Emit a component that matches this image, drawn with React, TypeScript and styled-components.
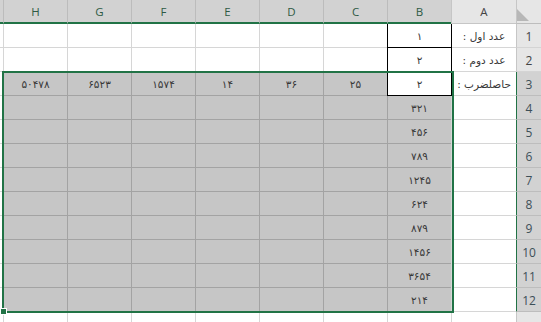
import React from "react";
import styled, { createGlobalStyle, css } from "styled-components";

const GREEN = "#217346";

const Global = createGlobalStyle`
  html, body { margin: 0; padding: 0; background: #ffffff; overflow: hidden; }
  #root { width: 541px; height: 322px; }
`;

const Sheet = styled.div`
  direction: rtl;
  width: 541px;
  height: 322px;
  overflow: hidden;
  display: grid;
  grid-template-columns: 25px 65px repeat(8, 64px);
  grid-template-rows: repeat(14, 24px);
  justify-content: start;
  align-content: start;
  font-family: "DejaVu Sans", "Noto Sans", sans-serif;
`;

type Pos = { $r: number; $c: number };

const placed = css<Pos>`
  grid-row: ${(p) => p.$r};
  grid-column: ${(p) => p.$c};
`;

const HeaderBase = css`
  box-sizing: border-box;
  display: flex;
  align-items: center;
  justify-content: center;
  font-family: "Open Sans", "Lato", sans-serif;
  font-size: 11.5px;
  color: #444444;
  background: #e6e6e6;
  border-left: 1px solid #c6c6c6;
  border-bottom: 1px solid #c6c6c6;
`;

const Corner = styled.div`
  ${HeaderBase};
  grid-row: 1;
  grid-column: 1;
  justify-content: flex-end;
  align-items: flex-end;
  padding: 0 3px 2px 0;
  border-bottom: 1px solid #bdbdbd;
`;

const ColHeader = styled.div<Pos & { $selected?: boolean }>`
  ${HeaderBase};
  ${placed};
  ${(p) =>
    p.$selected &&
    css`
      background: #d2d2d2;
      color: #2e5a44;
      border-left-color: #bcbcbc;
      border-bottom: 2px solid ${GREEN};
      padding-top: 1px;
    `}
`;

const RowHeader = styled.div<Pos & { $selected?: boolean }>`
  ${HeaderBase};
  ${placed};
  border-bottom-color: #d4d4d4;
  padding-top: 2px;
  font-size: 12px;
  ${(p) =>
    p.$selected &&
    css`
      background: #d2d2d2;
      color: #3d4f58;
      border-bottom-color: #bdbdbd;
      border-left: 2px solid ${GREEN};
      margin-left: -1px;
    `}
`;

const Cell = styled.div<Pos & { $selected?: boolean; $boxed?: boolean; $active?: boolean }>`
  ${placed};
  box-sizing: border-box;
  display: flex;
  align-items: center;
  justify-content: center;
  font-size: 10.5px;
  color: #383838;
  white-space: nowrap;
  background: #ffffff;
  border-left: 1px solid #d6d6d6;
  border-bottom: 1px solid #d6d6d6;
  ${(p) =>
    p.$selected &&
    css`
      background: #c6c6c6;
      border-left-color: #a3a3a3;
      border-bottom-color: #a3a3a3;
    `}
  ${(p) =>
    p.$active &&
    css`
      background: #ffffff;
    `}
  ${(p) =>
    p.$boxed &&
    css`
      border-left-color: #000000;
      border-bottom-color: #000000;
      box-shadow: 1px 0 0 #000000;
    `}
`;

const SelectionFrame = styled.div`
  grid-row: 4 / 14;
  grid-column: 3 / 10;
  margin: -1px -3px -1px -1px;
  border: 2px solid ${GREEN};
  position: relative;
  pointer-events: none;
`;

const FillHandle = styled.div`
  position: absolute;
  left: -4px;
  bottom: -4px;
  width: 5px;
  height: 5px;
  background: ${GREEN};
  border: 1px solid #ffffff;
`;

const cols = ["A", "B", "C", "D", "E", "F", "G", "H", "I"];
const selectedCols = new Set(["B", "C", "D", "E", "F", "G", "H", "I"]);

const data: Record<string, string> = {
  A1: "عدد اول :",
  B1: "۱",
  A2: "عدد دوم :",
  B2: "۲",
  A3: "حاصلضرب :",
  B3: "۲",
  C3: "۲۵",
  D3: "۳۶",
  E3: "۱۴",
  F3: "۱۵۷۴",
  G3: "۶۵۲۳",
  H3: "۵۰۴۷۸",
  B4: "۳۲۱",
  B5: "۴۵۶",
  B6: "۷۸۹",
  B7: "۱۲۴۵",
  B8: "۶۲۴",
  B9: "۸۷۹",
  B10: "۱۴۵۶",
  B11: "۳۶۵۴",
  B12: "۲۱۴",
};

const inSelection = (c: string, r: number) =>
  r >= 3 && r <= 12 && ["B", "C", "D", "E", "F", "G", "H"].includes(c);

export default function App() {
  const rows = Array.from({ length: 13 }, (_, i) => i + 1);
  return (
    <>
      <Global />
      <Sheet>
        <Corner>
          <svg width="12" height="12" viewBox="0 0 12 12">
            <polygon points="0,0 0,12 12,12" fill="#b7b7b7" />
          </svg>
        </Corner>
        {cols.map((c, ci) => (
          <ColHeader key={c} $r={1} $c={ci + 2} $selected={selectedCols.has(c)}>
            {c === "I" ? "" : c}
          </ColHeader>
        ))}
        {rows.map((r) => (
          <React.Fragment key={r}>
            <RowHeader $r={r + 1} $c={1} $selected={r >= 3 && r <= 12}>
              {r <= 12 ? r : ""}
            </RowHeader>
            {cols.map((c, ci) => (
              <Cell
                key={c + r}
                $r={r + 1}
                $c={ci + 2}
                $selected={inSelection(c, r)}
                $active={c === "B" && r === 3}
                $boxed={c === "B" && r <= 3}
              >
                {data[c + r] ?? ""}
              </Cell>
            ))}
          </React.Fragment>
        ))}
        <SelectionFrame>
          <FillHandle />
        </SelectionFrame>
      </Sheet>
    </>
  );
}
